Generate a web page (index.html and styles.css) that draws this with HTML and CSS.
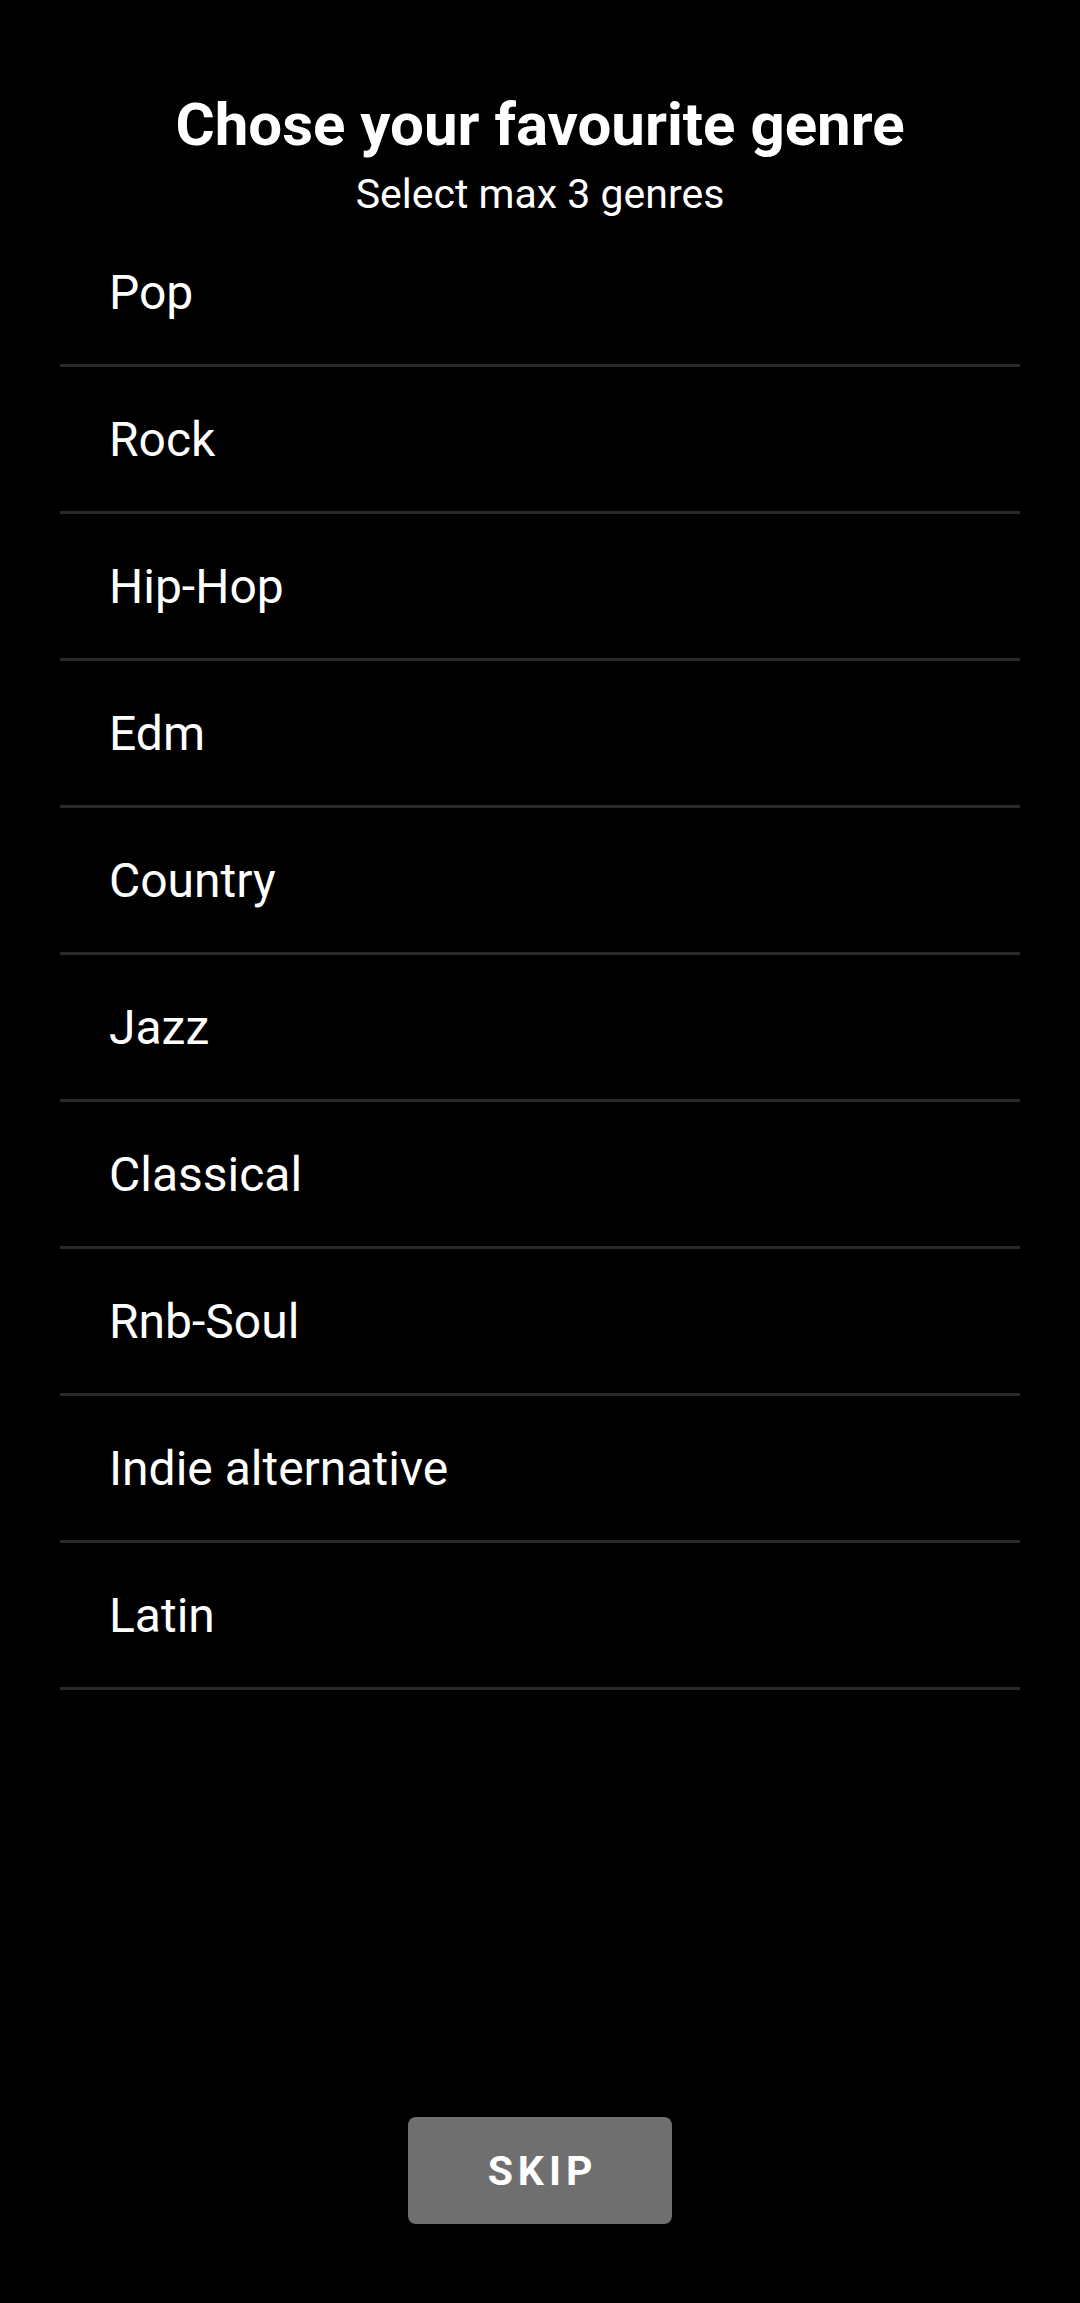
FILE: index.html
```html
<!DOCTYPE html>
<html>
<head>
<meta charset="utf-8">
<link rel="stylesheet" href="styles.css">
</head>
<body>
<div class="screen">
  <header class="header">
    <h1 class="title">Chose your favourite genre</h1>
    <p class="subtitle">Select max 3 genres</p>
  </header>
  <ul class="genres">
    <li class="genre">Pop</li>
    <li class="genre">Rock</li>
    <li class="genre">Hip-Hop</li>
    <li class="genre">Edm</li>
    <li class="genre">Country</li>
    <li class="genre">Jazz</li>
    <li class="genre">Classical</li>
    <li class="genre">Rnb-Soul</li>
    <li class="genre">Indie alternative</li>
    <li class="genre">Latin</li>
  </ul>
  <div class="footer">
    <button class="skip">SKIP</button>
  </div>
</div>
</body>
</html>
```
FILE: styles.css
```css
html, body {
  margin: 0;
  padding: 0;
  background: #000;
}
.screen {
  width: 1080px;
  height: 2303px;
  display: flex;
  flex-direction: column;
  background: #000;
  color: #fff;
  font-family: Roboto, "Liberation Sans", sans-serif;
}
.header {
  display: flex;
  flex-direction: column;
  align-items: center;
  padding-top: 90px;
}
.title {
  margin: 0;
  font-size: 60px;
  line-height: 70px;
  font-weight: 700;
}
.subtitle {
  margin: 10px 0 0;
  font-size: 41px;
  line-height: 48px;
  font-weight: 400;
}
.genres {
  list-style: none;
  margin: 2px 60px 0;
  padding: 0;
}
.genre {
  height: 144px;
  display: flex;
  align-items: center;
  padding-left: 49px;
  border-bottom: 3px solid #2a2a2a;
  font-size: 48px;
}
.footer {
  flex: 1;
  display: flex;
  justify-content: center;
  align-items: flex-end;
  padding-bottom: 79px;
}
.skip {
  width: 264px;
  height: 107px;
  border: none;
  border-radius: 8px;
  background: #6f6f6f;
  color: #fff;
  font-family: Roboto, "Liberation Sans", sans-serif;
  font-weight: 700;
  font-size: 41px;
  letter-spacing: 5px;
  padding: 0 0 0 5px;
}
```
